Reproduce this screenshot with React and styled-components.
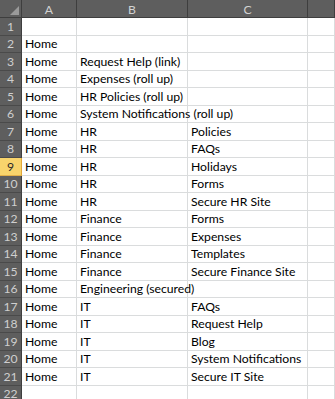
import styled, { createGlobalStyle } from 'styled-components';

const GlobalStyle = createGlobalStyle`
  html, body {
    margin: 0;
    padding: 0;
    background: #ffffff;
    overflow: hidden;
  }
`;

const rows = [
  ['', '', ''],
  ['Home', '', ''],
  ['Home', 'Request Help (link)', ''],
  ['Home', 'Expenses (roll up)', ''],
  ['Home', 'HR Policies (roll up)', ''],
  ['Home', 'System Notifications (roll up)', ''],
  ['Home', 'HR', 'Policies'],
  ['Home', 'HR', 'FAQs'],
  ['Home', 'HR', 'Holidays'],
  ['Home', 'HR', 'Forms'],
  ['Home', 'HR', 'Secure HR Site'],
  ['Home', 'Finance', 'Forms'],
  ['Home', 'Finance', 'Expenses'],
  ['Home', 'Finance', 'Templates'],
  ['Home', 'Finance', 'Secure Finance Site'],
  ['Home', 'Engineering (secured)', ''],
  ['Home', 'IT', 'FAQs'],
  ['Home', 'IT', 'Request Help'],
  ['Home', 'IT', 'Blog'],
  ['Home', 'IT', 'System Notifications'],
  ['Home', 'IT', 'Secure IT Site'],
  ['', '', ''],
];

const ACTIVE_ROW = 9;

function App() {
  return (
    <>
      <GlobalStyle />
      <Sheet>
        <Corner>
          <svg width="9" height="9" viewBox="0 0 9 9">
            <polygon points="9,0 9,9 0,9" fill="#9a9a9a" />
          </svg>
        </Corner>
        {['A', 'B', 'C', ''].map((c, i) => (
          <ColHead key={i}>{c}</ColHead>
        ))}
        {rows.map((r, i) => (
          <Row key={i} num={i + 1} cells={r} />
        ))}
      </Sheet>
    </>
  );
}

function Row({ num, cells }) {
  return (
    <>
      <RowHead $active={num === ACTIVE_ROW}>{num}</RowHead>
      {cells.map((t, i) => (
        <Cell key={i}>{t}</Cell>
      ))}
      <Cell />
    </>
  );
}

const Sheet = styled.div`
  display: grid;
  grid-template-columns: 22px 55px 111px 120px 1fr;
  grid-template-rows: 18px repeat(21, 17.5px) 1fr;
  width: 335px;
  height: 399px;
  overflow: hidden;
  font-family: Lato, "Liberation Sans", sans-serif;
  font-size: 12.2px;
`;

const Corner = styled.div`
  background: #5e5e5e;
  border-right: 1px solid #3e3e3e;
  border-bottom: 1px solid #3e3e3e;
  display: flex;
  align-items: flex-end;
  justify-content: flex-end;
  padding: 0 2px 2px 0;
  box-sizing: border-box;
`;

const ColHead = styled.div`
  background: #5e5e5e;
  color: #d2d2d2;
  border-right: 1px solid #3e3e3e;
  border-bottom: 1px solid #3e3e3e;
  display: flex;
  align-items: center;
  justify-content: center;
  box-sizing: border-box;
  padding-top: 1px;
`;

const RowHead = styled.div`
  background: ${(p) => (p.$active ? '#f8d46c' : '#5e5e5e')};
  color: ${(p) => (p.$active ? '#2a2a2a' : '#cfcfcf')};
  border-right: 1px solid ${(p) => (p.$active ? '#e2a83a' : '#3e3e3e')};
  border-bottom: 1px solid ${(p) => (p.$active ? '#e2b04a' : '#4a4a4a')};
  display: flex;
  align-items: flex-start;
  justify-content: center;
  box-sizing: border-box;
  padding-top: 2.5px;
  line-height: 11px;
`;

const Cell = styled.div`
  color: #000000;
  border-right: 1px solid #dadcdd;
  border-bottom: 1px solid #dadcdd;
  box-sizing: border-box;
  padding: 2.5px 3px 0;
  display: flex;
  align-items: flex-start;
  line-height: 11px;
  white-space: nowrap;
  overflow: visible;
  min-width: 0;
`;

export default App;
